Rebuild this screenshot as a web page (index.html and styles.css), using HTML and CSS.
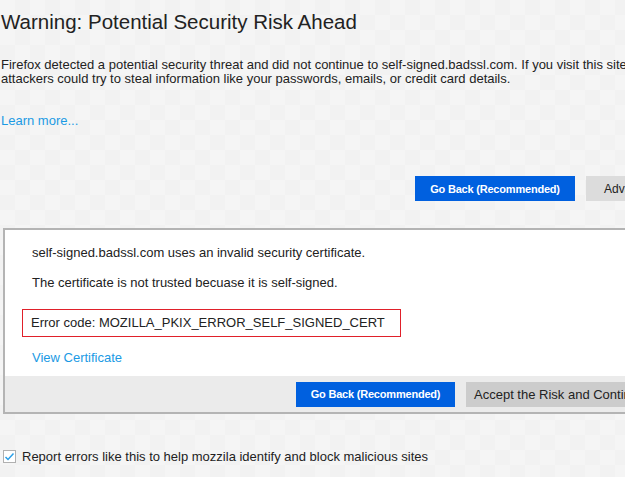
FILE: index.html
```html
<!DOCTYPE html>
<html>
<head>
<meta charset="utf-8">
<link rel="stylesheet" href="styles.css">
</head>
<body>
<div class="page">
  <h1 class="title">Warning: Potential Security Risk Ahead</h1>
  <p class="intro">Firefox detected a potential security threat and did not continue to self-signed.badssl.com. If you visit this site, attackers could try to steal information like your passwords, emails, or credit card details.</p>
  <a class="link learn">Learn more...</a>
  <div class="actions">
    <button class="btn primary">Go Back (Recommended)</button>
    <button class="btn secondary">Advanced...</button>
  </div>
  <div class="panel">
    <div class="panel-body">
      <p class="line first">self-signed.badssl.com uses an invalid security certificate.</p>
      <p class="line">The certificate is not trusted becuase it is self-signed.</p>
      <div class="errcode">Error code: MOZILLA_PKIX_ERROR_SELF_SIGNED_CERT</div>
      <a class="link viewcert">View Certificate</a>
    </div>
    <div class="panel-footer">
      <button class="btn primary">Go Back (Recommended)</button>
      <button class="btn accept">Accept the Risk and Continue</button>
    </div>
  </div>
  <label class="report">
    <span class="check"><svg width="13" height="13" viewBox="0 0 13 13"><path d="M2.5 7 L5 9.5 L10.5 3.5" fill="none" stroke="#2a9fe8" stroke-width="1.5"/></svg></span>
    <span>Report errors like this to help mozzila identify and block malicious sites</span>
  </label>
</div>
</body>
</html>
```
FILE: styles.css
```css
html, body {
  margin: 0;
  padding: 0;
  overflow: hidden;
}
body {
  width: 625px;
  height: 477px;
  background-color: #f5f5f5;
  background-image: conic-gradient(#f2f2f2 25%, transparent 0 50%, #f2f2f2 0 75%, transparent 0);
  background-size: 30px 30px;
  font-family: "Liberation Sans", Arial, sans-serif;
  color: #222;
}
.page {
  width: 900px;
  padding-left: 1px;
}
.title {
  margin: 0;
  padding-top: 10px;
  font-size: 20.5px;
  font-weight: normal;
  line-height: 24px;
  color: #222;
}
.intro {
  width: 630px;
  margin: 24px 0 0 0;
  font-size: 13px;
  line-height: 14px;
}
.link {
  color: #1b9ae4;
  font-size: 13px;
  display: block;
}
.learn {
  margin-top: 27px;
  line-height: 16px;
}
.actions {
  display: flex;
  gap: 11px;
  margin-top: 47px;
  padding-left: 414px;
}
.btn {
  font-family: "Liberation Sans", Arial, sans-serif;
  border: none;
  margin: 0;
  height: 25px;
  padding: 0;
  font-size: 11px;
}
.primary {
  background: #0060df;
  color: #fff;
  font-weight: bold;
  width: 160px;
  letter-spacing: -0.2px;
}
.secondary {
  background: #dcdcdc;
  color: #222;
  width: 120px;
  font-size: 12px;
  text-align: left;
  padding-left: 18px;
}
.panel {
  margin-top: 27px;
  margin-left: 2px;
  border: 2px solid #b4b4b4;
  border-right: none;
  background: #fff;
}
.panel-body {
  padding: 15px 0 10px 27px;
}
.line {
  margin: 0;
  font-size: 13px;
  line-height: 16px;
}
.line + .line {
  margin-top: 14px;
}
.errcode {
  margin: 18px 0 0 -10px;
  width: 369px;
  height: 26px;
  border: 1px solid #e0202a;
  padding-left: 8px;
  font-size: 13px;
  line-height: 26px;
}
.viewcert {
  margin-top: 13px;
  line-height: 16px;
}
.panel-footer {
  background: #ebebeb;
  height: 36px;
  display: flex;
  align-items: center;
  gap: 11px;
  padding-left: 291px;
}
.panel-footer .primary {
  width: 159px;
}
.accept {
  background: #cccccc;
  color: #222;
  font-size: 13px;
  width: 200px;
  text-align: left;
  padding-left: 8px;
}
.report {
  display: flex;
  align-items: center;
  gap: 6px;
  margin-top: 35px;
  margin-left: 2px;
  font-size: 13px;
}
.check {
  width: 13px;
  height: 13px;
  box-sizing: border-box;
  border: 1px solid #b0b0b0;
  background: #fff;
  display: flex;
  align-items: center;
  justify-content: center;
}
.check svg {
  display: block;
  flex: none;
}
```
